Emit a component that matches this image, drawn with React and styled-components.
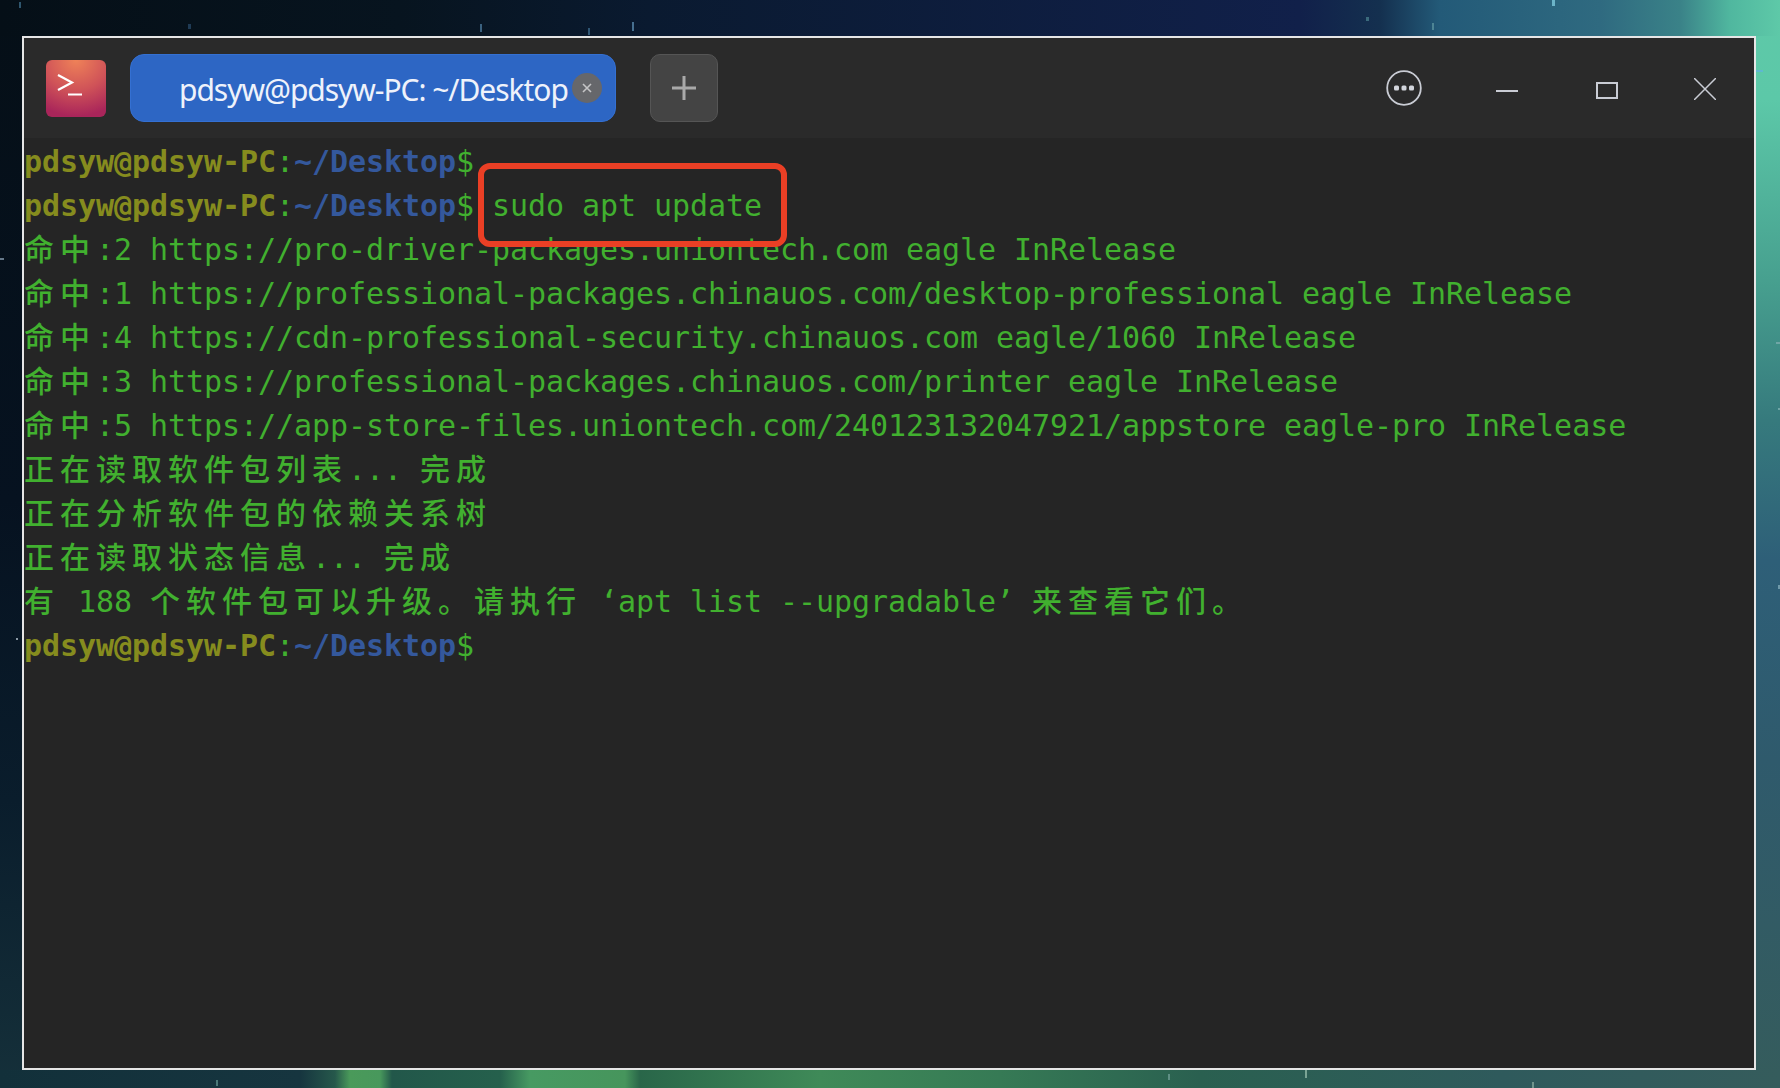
import React from "react";
import styled, { createGlobalStyle } from "styled-components";

const star = (x, y, color = "#7fa8c8", w = 3, h = 7) =>
  `linear-gradient(${color}, ${color}) ${x}px ${y}px / ${w}px ${h}px no-repeat`;

const GlobalStyle = createGlobalStyle`
  html, body {
    margin: 0;
    padding: 0;
    height: 1088px;
    overflow: hidden;
    background: #0a1a2a;
  }
`;

// the wallpaper only shows as a thin frame around the window
const Desktop = styled.div`
  box-sizing: border-box;
  width: 1780px;
  height: 1088px;
  padding: 36px 24px 18px 22px;
  background:
    ${star(19, 2, "#2f566e", 2, 6)},
    ${star(188, 24, "#1f3b55", 3, 5)},
    ${star(480, 24, "#3a617f", 2, 8)},
    ${star(632, 22, "#466f8f", 2, 9)},
    ${star(588, 28, "#2f5674", 2, 7)},
    ${star(1366, 17, "#3b6a7c", 3, 4)},
    ${star(1432, 23, "#4d8494", 2, 7)},
    ${star(1552, 0, "#6cb4c8", 3, 6)},
    ${star(1756, 70, "#5fb8d0", 7, 2)},
    ${star(1776, 342, "#6fa6a6", 4, 2)},
    ${star(1778, 408, "#6fa6a6", 2, 2)},
    ${star(1778, 585, "#6f9aaa", 2, 4)},
    ${star(0, 258, "#66798a", 4, 2)},
    ${star(16, 638, "#8a98a4", 2, 2)},
    ${star(216, 1080, "#4a7878", 2, 6)},
    ${star(1168, 1074, "#5f8f84", 2, 6)},
    ${star(1305, 1070, "#7aa494", 2, 8)},
    ${star(1532, 1082, "#6f948c", 2, 6)},
    linear-gradient(90deg, #12303a 0, #16353f 300px, #26584b 335px, #4a9a5a 350px, #48985c 380px, #22574a 392px, #25604c 500px, #479a62 530px, #46955c 625px, #296649 640px, #3f8a58 820px, #367a55 1000px, #2a6050 1200px, #2f5a5c 1500px, #355c5c 1780px) 0 1070px / 100% 18px no-repeat,
    linear-gradient(90deg, #050f17 0, #07141f 400px, #0a1a30 650px, #11204a 1300px, #14304f 1380px, #235a78 1440px, #2f6a80 1600px, #3a8288 1680px, #50b79f 1730px, #5ec9a8 1780px) 0 0 / 100% 36px no-repeat,
    linear-gradient(180deg, #5ec9a8 0, #5cc8a8 100px, #47a08f 280px, #367a7d 420px, #2e5f78 560px, #2f5a6c 760px, #355c5c 1088px) 1756px 0 / 24px 100% no-repeat,
    linear-gradient(180deg, #050f17 0, #061220 500px, #0a1d2c 800px, #15303a 1088px) 0 0 / 22px 100% no-repeat;
`;

const Window = styled.div`
  box-sizing: border-box;
  height: 100%;
  border: 2px solid #e6e6e6;
  background: #252525;
  display: flex;
  flex-direction: column;
`;

const TitleBar = styled.header`
  flex: none;
  height: 100px;
  background: #2a2a2a;
  display: flex;
  align-items: center;
  padding: 0 38px 0 22px;
  font-family: "Noto Sans", sans-serif;
`;

const AppIcon = styled.div`
  width: 60px;
  height: 57px;
  border-radius: 6px;
  background: radial-gradient(ellipse 60px 56px at 50% 0, #ef8258 0, #cf5258 55%, #a9255a 100%);
  display: flex;
  align-items: center;
  justify-content: center;
`;

const Tab = styled.div`
  box-sizing: border-box;
  width: 486px;
  height: 68px;
  margin-left: 24px;
  border-radius: 14px;
  background: #2d66c4;
  border: 1px solid #3470d2;
  display: flex;
  align-items: center;
  padding-left: 48px;
`;

const TabTitle = styled.span`
  color: #eef2fb;
  font-size: 30px;
  letter-spacing: -1.04px;
  white-space: nowrap;
  width: 393px;
  padding-top: 2px;
`;

const TabClose = styled.span`
  width: 30px;
  height: 30px;
  border-radius: 50%;
  background: #66676b;
  display: flex;
  align-items: center;
  justify-content: center;
`;

const NewTab = styled.div`
  box-sizing: border-box;
  width: 68px;
  height: 68px;
  margin-left: 34px;
  border-radius: 10px;
  background: #444;
  border: 1px solid #555;
  display: flex;
  align-items: center;
  justify-content: center;
`;

const Controls = styled.div`
  margin-left: auto;
  display: flex;
  align-items: center;
`;

const Control = styled.span`
  display: flex;
  margin-left: ${(p) => p.$gap || 0}px;
  margin-top: ${(p) => (p.$drop ? 2 : 0)}px;
`;

const Screen = styled.main`
  position: relative;
  flex: 1;
  padding-top: 2px;
  font-family: "DejaVu Sans Mono", "Noto Sans CJK SC", monospace;
  font-size: 30px;
  letter-spacing: -0.06px;
  color: #41b02f;
`;

const Line = styled.div`
  height: 44px;
  line-height: 44px;
  white-space: pre;
`;

const Wide = styled.span`
  font-family: "Noto Sans CJK SC", sans-serif;
  font-weight: 500;
  line-height: 1;
  letter-spacing: 6px;
`;

const User = styled.span`
  color: #868c1e;
  font-weight: 700;
`;

const Path = styled.span`
  color: #34589c;
  font-weight: 700;
`;

// annotation drawn on top of the screenshot
const Callout = styled.div`
  position: absolute;
  left: 454px;
  top: 25px;
  width: 309px;
  height: 84px;
  box-sizing: border-box;
  border: 6px solid #ea3f25;
  border-radius: 12px;
`;

const Prompt = () => (
  <>
    <User>pdsyw@pdsyw-PC</User>
    :
    <Path>~/Desktop</Path>
    $
  </>
);

// CJK glyphs take two terminal cells, so they get extra tracking
const Output = ({ children }) => (
  <Line>
    {children.split(/([\u4e00-\u9fff\u3002]+)/).map((part, i) =>
      i % 2 ? <Wide key={i}>{part}</Wide> : part
    )}
  </Line>
);

const outputLines = [
  "命中:2 https://pro-driver-packages.uniontech.com eagle InRelease",
  "命中:1 https://professional-packages.chinauos.com/desktop-professional eagle InRelease",
  "命中:4 https://cdn-professional-security.chinauos.com eagle/1060 InRelease",
  "命中:3 https://professional-packages.chinauos.com/printer eagle InRelease",
  "命中:5 https://app-store-files.uniontech.com/240123132047921/appstore eagle-pro InRelease",
  "正在读取软件包列表... 完成",
  "正在分析软件包的依赖关系树",
  "正在读取状态信息... 完成",
  "有 188 个软件包可以升级。请执行 ‘apt list --upgradable’ 来查看它们。",
];

export default function App() {
  return (
    <>
      <GlobalStyle />
      <Desktop>
        <Window>
          <TitleBar>
            <AppIcon>
              <svg width="40" height="36" viewBox="0 0 40 36" fill="none" stroke="#fff">
                <path d="M2 5 L16 12.5 L2 20" strokeWidth="2.2" />
                <path d="M12 24.5 H26" strokeWidth="2" />
              </svg>
            </AppIcon>
            <Tab>
              <TabTitle>pdsyw@pdsyw-PC: ~/Desktop</TabTitle>
              <TabClose>
                <svg width="12" height="12" viewBox="0 0 12 12" stroke="#c4c4c6" strokeWidth="1.6">
                  <path d="M2 2 L10 10 M10 2 L2 10" />
                </svg>
              </TabClose>
            </Tab>
            <NewTab>
              <svg width="26" height="26" viewBox="0 0 26 26" stroke="#a9a9a9" strokeWidth="3">
                <path d="M13 1 V25 M1 13 H25" />
              </svg>
            </NewTab>
            <Controls>
              <Control>
                <svg width="36" height="36" viewBox="0 0 36 36">
                  <circle cx="18" cy="18" r="16.8" fill="none" stroke="#c9ccd4" strokeWidth="1.8" />
                  <rect x="8" y="15.5" width="5" height="5" rx="1.5" fill="#d2d5dc" />
                  <rect x="15.5" y="15.5" width="5" height="5" rx="1.5" fill="#d2d5dc" />
                  <rect x="23" y="15.5" width="5" height="5" rx="1.5" fill="#d2d5dc" />
                </svg>
              </Control>
              <Control $gap={74}>
                <svg width="22" height="22" viewBox="0 0 22 22" stroke="#c9ccd4" strokeWidth="2">
                  <path d="M0 14 H22" />
                </svg>
              </Control>
              <Control $gap={78}>
                <svg width="22" height="22" viewBox="0 0 22 22" fill="none" stroke="#c9ccd4" strokeWidth="2">
                  <rect x="1" y="6" width="20" height="15" />
                </svg>
              </Control>
              <Control $gap={76} $drop>
                <svg width="22" height="22" viewBox="0 0 22 22" stroke="#c9ccd4" strokeWidth="1.5">
                  <path d="M0 0 L22 22 M22 0 L0 22" />
                </svg>
              </Control>
            </Controls>
          </TitleBar>
          <Screen>
            <Line><Prompt /></Line>
            <Line><Prompt /> sudo apt update</Line>
            {outputLines.map((text) => (
              <Output key={text}>{text}</Output>
            ))}
            <Line><Prompt /></Line>
            <Callout />
          </Screen>
        </Window>
      </Desktop>
    </>
  );
}
